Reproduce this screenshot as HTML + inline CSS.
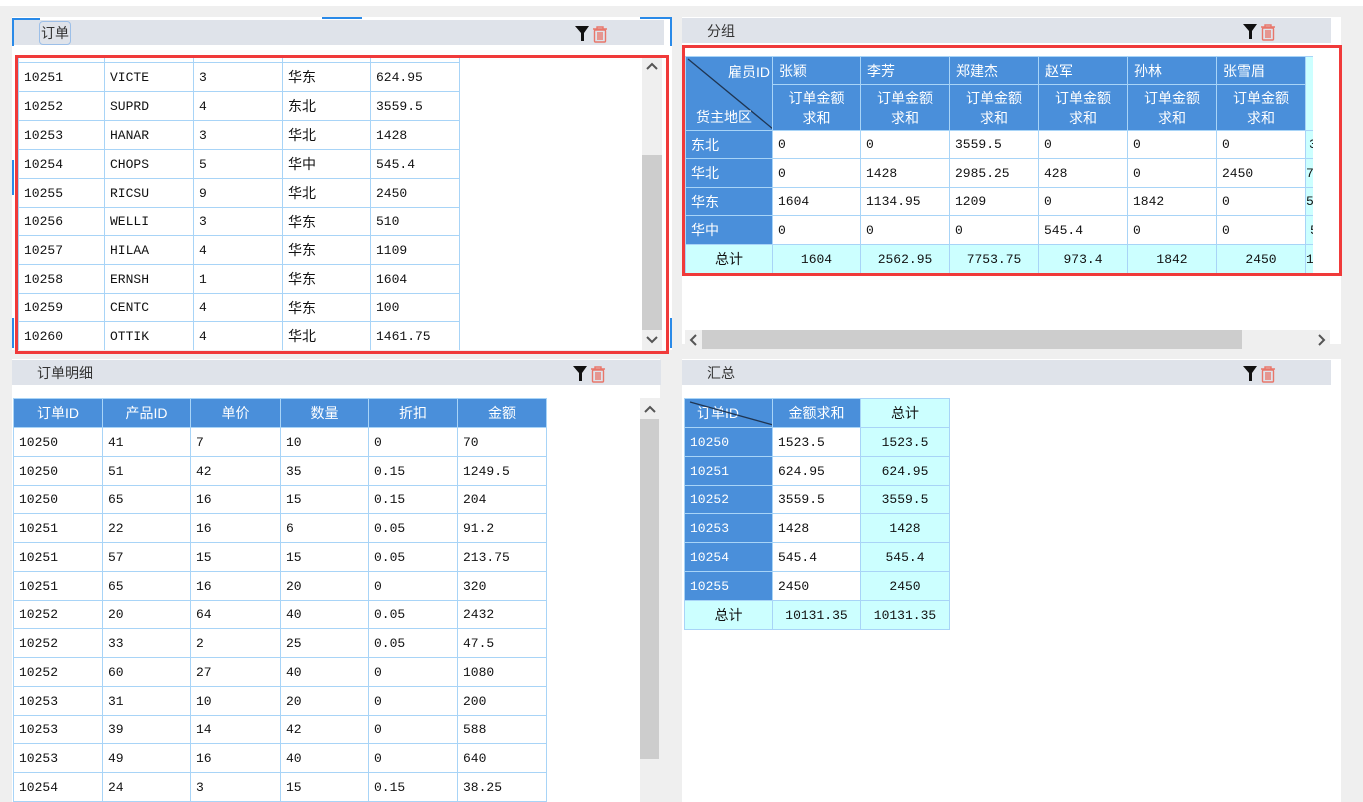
<!DOCTYPE html>
<html><head><meta charset="utf-8">
<style>
*{margin:0;padding:0;box-sizing:border-box}
body{width:1363px;height:802px;background:#efefef;position:relative;overflow:hidden;font-family:"Liberation Sans","Noto Sans CJK SC",sans-serif;font-size:14px;color:#111}
.abs{position:absolute}
.panel{position:absolute;background:#fff}
.hdr{position:absolute;background:#dfe3ea;height:25px}
.ttl{position:absolute;top:3px;font-size:14px;color:#333}
table{border-collapse:collapse;table-layout:fixed;position:absolute}
td{border:1px solid #a8d4f7;padding:0 0 0 5px;white-space:nowrap;overflow:hidden;font-family:"Liberation Mono","Noto Sans CJK SC",monospace;font-size:13px;color:#111}
td.cn{font-family:"Liberation Sans","Noto Sans CJK SC",sans-serif;font-size:14px}
.bh td{background:#4a8fda;color:#fff;text-align:center;padding:0;font-family:"Liberation Sans","Noto Sans CJK SC",sans-serif;font-size:14px}
td.b{background:#4a8fda;color:#fff}
td.c{background:#ccffff;text-align:center;padding:0}
.sb{position:absolute;background:#efefef}
.th{position:absolute;background:#cdcdcd}
.red{position:absolute;border:3px solid #f03a3a}
</style></head><body>
<div class="abs" style="left:0;top:0;width:1363px;height:6px;background:#fff"></div>

<!-- top-left panel -->
<div class="panel" style="left:12px;top:17px;width:660px;height:333px"></div>
<div class="abs" style="left:12px;top:18px;width:28px;height:2px;background:#2a8ae8"></div>
<div class="abs" style="left:322px;top:17px;width:40px;height:2px;background:#2a8ae8"></div>
<div class="abs" style="left:640px;top:17px;width:32px;height:2px;background:#2a8ae8"></div>
<div class="abs" style="left:12px;top:18px;width:2px;height:28px;background:#2a8ae8"></div>
<div class="abs" style="left:670px;top:18px;width:2px;height:28px;background:#2a8ae8"></div>
<div class="abs" style="left:12px;top:160px;width:2px;height:35px;background:#2a8ae8"></div>
<div class="abs" style="left:12px;top:318px;width:2px;height:30px;background:#2a8ae8"></div>
<div class="abs" style="left:670px;top:318px;width:2px;height:30px;background:#2a8ae8"></div>
<div class="hdr" style="left:14px;top:20px;width:650px"></div>
<div class="abs" style="left:39px;top:21px;width:32px;height:24px;border:1px solid #9cbfe8;border-radius:4px"></div>
<div class="ttl" style="left:41px;top:23px">订单</div>
<div style="position:absolute;left:18px;top:57px;width:624px;height:293px;overflow:hidden">
<table style="left:0;top:-24px;width:441px">
<colgroup><col style="width:86px"><col style="width:89px"><col style="width:89px"><col style="width:88px"><col style="width:89px"></colgroup>
<tr style="height:29px"><td>10250</td><td>VINET</td><td>5</td><td class="cn">华北</td><td>440</td></tr>
<tr style="height:29px"><td>10251</td><td>VICTE</td><td>3</td><td class="cn">华东</td><td>624.95</td></tr>
<tr style="height:29px"><td>10252</td><td>SUPRD</td><td>4</td><td class="cn">东北</td><td>3559.5</td></tr>
<tr style="height:29px"><td>10253</td><td>HANAR</td><td>3</td><td class="cn">华北</td><td>1428</td></tr>
<tr style="height:29px"><td>10254</td><td>CHOPS</td><td>5</td><td class="cn">华中</td><td>545.4</td></tr>
<tr style="height:29px"><td>10255</td><td>RICSU</td><td>9</td><td class="cn">华北</td><td>2450</td></tr>
<tr style="height:28px"><td>10256</td><td>WELLI</td><td>3</td><td class="cn">华东</td><td>510</td></tr>
<tr style="height:29px"><td>10257</td><td>HILAA</td><td>4</td><td class="cn">华东</td><td>1109</td></tr>
<tr style="height:29px"><td>10258</td><td>ERNSH</td><td>1</td><td class="cn">华东</td><td>1604</td></tr>
<tr style="height:28px"><td>10259</td><td>CENTC</td><td>4</td><td class="cn">华东</td><td>100</td></tr>
<tr style="height:29px"><td>10260</td><td>OTTIK</td><td>4</td><td class="cn">华北</td><td>1461.75</td></tr>
</table>
</div>
<div class="sb" style="left:642px;top:57px;width:20px;height:293px"></div>
<div class="th" style="left:642px;top:155px;width:20px;height:175px"></div>
<svg class="abs" style="left:645px;top:60px" width="14" height="12"><path d="M2 9L7 4L12 9" fill="none" stroke="#555" stroke-width="2"/></svg>
<svg class="abs" style="left:645px;top:334px" width="14" height="12"><path d="M2 3L7 8L12 3" fill="none" stroke="#555" stroke-width="2"/></svg>
<div class="red" style="left:15px;top:55px;width:654px;height:299px"></div>

<!-- top-right panel -->
<div class="panel" style="left:682px;top:17px;width:659px;height:327px"></div>
<div class="hdr" style="left:682px;top:18px;width:649px"></div>
<div class="ttl" style="left:707px;top:21px">分组</div>
<div style="position:absolute;left:685px;top:56px;width:628px;height:218px;overflow:hidden">
<table style="left:0;top:0;width:720px">
<colgroup><col style="width:87px"><col style="width:88px"><col style="width:89px"><col style="width:89px"><col style="width:89px"><col style="width:89px"><col style="width:89px"><col style="width:100px"></colgroup>
<tr class="bh" style="height:28px"><td rowspan="2" style="position:relative;vertical-align:top">
<svg style="position:absolute;left:0;top:0" width="87" height="74"><line x1="2" y1="2" x2="87" y2="72" stroke="#1f3552" stroke-width="1.3"/></svg>
<div style="position:absolute;right:2px;top:5px">雇员ID</div><div style="position:absolute;left:10px;top:50px">货主地区</div></td>
<td style="text-align:left;padding-left:6px">张颖</td><td style="text-align:left;padding-left:6px">李芳</td><td style="text-align:left;padding-left:6px">郑建杰</td><td style="text-align:left;padding-left:6px">赵军</td><td style="text-align:left;padding-left:6px">孙林</td><td style="text-align:left;padding-left:6px">张雪眉</td><td rowspan="2" style="background:#ccffff"></td></tr>
<tr class="bh" style="height:46px"><td style="line-height:20px">订单金额<br>求和</td><td style="line-height:20px">订单金额<br>求和</td><td style="line-height:20px">订单金额<br>求和</td><td style="line-height:20px">订单金额<br>求和</td><td style="line-height:20px">订单金额<br>求和</td><td style="line-height:20px">订单金额<br>求和</td></tr>
<tr style="height:28px"><td class="b cn">东北</td><td>0</td><td>0</td><td>3559.5</td><td>0</td><td>0</td><td>0</td><td class="c" style="text-align:left;padding-left:3px">3559.5</td></tr>
<tr style="height:29px"><td class="b cn">华北</td><td>0</td><td>1428</td><td>2985.25</td><td>428</td><td>0</td><td>2450</td><td class="c" style="text-align:left;padding-left:0">7291.25</td></tr>
<tr style="height:28px"><td class="b cn">华东</td><td>1604</td><td>1134.95</td><td>1209</td><td>0</td><td>1842</td><td>0</td><td class="c" style="text-align:left;padding-left:0">5789.95</td></tr>
<tr style="height:29px"><td class="b cn">华中</td><td>0</td><td>0</td><td>0</td><td>545.4</td><td>0</td><td>0</td><td class="c" style="text-align:left;padding-left:4px">545.4</td></tr>
<tr style="height:29px"><td class="c cn">总计</td><td class="c">1604</td><td class="c">2562.95</td><td class="c">7753.75</td><td class="c">973.4</td><td class="c">1842</td><td class="c">2450</td><td class="c" style="text-align:left;padding-left:0">17186.1</td></tr>
</table>
</div>
<div class="red" style="left:682px;top:45px;width:660px;height:231px"></div>
<div class="sb" style="left:685px;top:330px;width:645px;height:19px"></div>
<div class="th" style="left:702px;top:330px;width:540px;height:19px"></div>
<svg class="abs" style="left:688px;top:333px" width="12" height="14"><path d="M8 2L3 7L8 12" fill="none" stroke="#555" stroke-width="2"/></svg>
<svg class="abs" style="left:1315px;top:333px" width="12" height="14"><path d="M4 2L9 7L4 12" fill="none" stroke="#555" stroke-width="2"/></svg>

<!-- bottom-left -->
<div class="panel" style="left:12px;top:359px;width:648px;height:443px"></div>
<div class="hdr" style="left:12px;top:360px;width:649px"></div>
<div class="ttl" style="left:37px;top:363px">订单明细</div>
<table style="left:13px;top:398px;width:533px">
<colgroup><col style="width:89px"><col style="width:88px"><col style="width:90px"><col style="width:88px"><col style="width:89px"><col style="width:89px"></colgroup>
<tr class="bh" style="height:29px"><td>订单ID</td><td>产品ID</td><td>单价</td><td>数量</td><td>折扣</td><td>金额</td></tr>
<tr style="height:29px"><td>10250</td><td>41</td><td>7</td><td>10</td><td>0</td><td>70</td></tr>
<tr style="height:29px"><td>10250</td><td>51</td><td>42</td><td>35</td><td>0.15</td><td>1249.5</td></tr>
<tr style="height:28px"><td>10250</td><td>65</td><td>16</td><td>15</td><td>0.15</td><td>204</td></tr>
<tr style="height:29px"><td>10251</td><td>22</td><td>16</td><td>6</td><td>0.05</td><td>91.2</td></tr>
<tr style="height:29px"><td>10251</td><td>57</td><td>15</td><td>15</td><td>0.05</td><td>213.75</td></tr>
<tr style="height:29px"><td>10251</td><td>65</td><td>16</td><td>20</td><td>0</td><td>320</td></tr>
<tr style="height:28px"><td>10252</td><td>20</td><td>64</td><td>40</td><td>0.05</td><td>2432</td></tr>
<tr style="height:29px"><td>10252</td><td>33</td><td>2</td><td>25</td><td>0.05</td><td>47.5</td></tr>
<tr style="height:29px"><td>10252</td><td>60</td><td>27</td><td>40</td><td>0</td><td>1080</td></tr>
<tr style="height:29px"><td>10253</td><td>31</td><td>10</td><td>20</td><td>0</td><td>200</td></tr>
<tr style="height:28px"><td>10253</td><td>39</td><td>14</td><td>42</td><td>0</td><td>588</td></tr>
<tr style="height:29px"><td>10253</td><td>49</td><td>16</td><td>40</td><td>0</td><td>640</td></tr>
<tr style="height:29px"><td>10254</td><td>24</td><td>3</td><td>15</td><td>0.15</td><td>38.25</td></tr>
</table>
<div class="sb" style="left:640px;top:398px;width:20px;height:404px"></div>
<div class="th" style="left:640px;top:419px;width:19px;height:340px"></div>
<svg class="abs" style="left:643px;top:403px" width="14" height="12"><path d="M2 9L7 4L12 9" fill="none" stroke="#555" stroke-width="2"/></svg>

<!-- bottom-right -->
<div class="panel" style="left:682px;top:359px;width:659px;height:443px"></div>
<div class="hdr" style="left:682px;top:360px;width:649px"></div>
<div class="ttl" style="left:707px;top:363px">汇总</div>
<table style="left:684px;top:398px;width:265px">
<colgroup><col style="width:88px"><col style="width:88px"><col style="width:89px"></colgroup>
<tr class="bh" style="height:29px"><td style="position:relative;text-align:left;padding-left:12px">订单ID<svg style="position:absolute;left:0;top:0" width="88" height="29"><line x1="5" y1="3" x2="88" y2="26" stroke="#1f3552" stroke-width="1.3"/></svg></td><td>金额求和</td><td style="background:#ccffff;color:#111">总计</td></tr>
<tr style="height:29px"><td class="b">10250</td><td>1523.5</td><td class="c">1523.5</td></tr>
<tr style="height:29px"><td class="b">10251</td><td>624.95</td><td class="c">624.95</td></tr>
<tr style="height:28px"><td class="b">10252</td><td>3559.5</td><td class="c">3559.5</td></tr>
<tr style="height:29px"><td class="b">10253</td><td>1428</td><td class="c">1428</td></tr>
<tr style="height:29px"><td class="b">10254</td><td>545.4</td><td class="c">545.4</td></tr>
<tr style="height:29px"><td class="b">10255</td><td>2450</td><td class="c">2450</td></tr>
<tr style="height:29px"><td class="c cn">总计</td><td class="c">10131.35</td><td class="c">10131.35</td></tr>
</table>

<!-- icons -->
<svg class="abs" style="left:574px;top:24px" width="40" height="20"><path d="M1 2H15L10 9V17H7V9Z" fill="#111"/><g fill="none" stroke="#e8766a" stroke-width="1.4"><path d="M19 5H33M23 5V3H29V5"/><rect x="20.5" y="6" width="11" height="12" rx="1"/><path d="M24 8V16M26 8V16M28 8V16"/></g></svg>
<svg class="abs" style="left:572px;top:364px" width="40" height="20"><path d="M1 2H15L10 9V17H7V9Z" fill="#111"/><g fill="none" stroke="#e8766a" stroke-width="1.4"><path d="M19 5H33M23 5V3H29V5"/><rect x="20.5" y="6" width="11" height="12" rx="1"/><path d="M24 8V16M26 8V16M28 8V16"/></g></svg>
<svg class="abs" style="left:1242px;top:22px" width="40" height="20"><path d="M1 2H15L10 9V17H7V9Z" fill="#111"/><g fill="none" stroke="#e8766a" stroke-width="1.4"><path d="M19 5H33M23 5V3H29V5"/><rect x="20.5" y="6" width="11" height="12" rx="1"/><path d="M24 8V16M26 8V16M28 8V16"/></g></svg>
<svg class="abs" style="left:1242px;top:364px" width="40" height="20"><path d="M1 2H15L10 9V17H7V9Z" fill="#111"/><g fill="none" stroke="#e8766a" stroke-width="1.4"><path d="M19 5H33M23 5V3H29V5"/><rect x="20.5" y="6" width="11" height="12" rx="1"/><path d="M24 8V16M26 8V16M28 8V16"/></g></svg>
</body></html>
